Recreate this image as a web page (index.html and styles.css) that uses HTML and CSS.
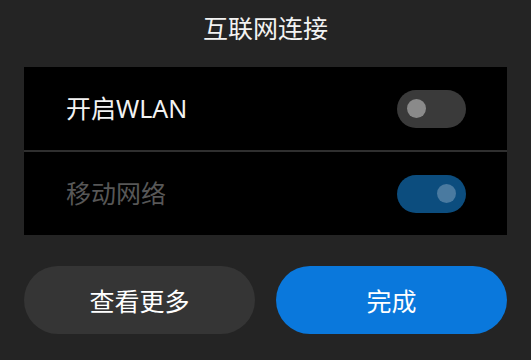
FILE: index.html
```html
<!DOCTYPE html>
<html lang="zh-CN">
<head>
<meta charset="utf-8">
<link rel="stylesheet" href="styles.css">
</head>
<body>
<div class="dialog">
  <h1 class="title">互联网连接</h1>
  <div class="card">
    <div class="row">
      <span class="label">开启WLAN</span>
      <span class="toggle off"><span class="knob"></span></span>
    </div>
    <div class="divider"></div>
    <div class="row">
      <span class="label dim">移动网络</span>
      <span class="toggle on"><span class="knob"></span></span>
    </div>
  </div>
  <div class="actions">
    <button class="btn secondary">查看更多</button>
    <button class="btn primary">完成</button>
  </div>
</div>
</body>
</html>
```
FILE: styles.css
```css
html, body {
  margin: 0;
  padding: 0;
  background: #242424;
}
body {
  width: 531px;
  height: 360px;
  overflow: hidden;
  font-family: "Noto Sans", "Noto Sans CJK SC", sans-serif;
  color: #fff;
}
.dialog {
  display: flex;
  flex-direction: column;
  padding: 0 24px;
}
.title {
  margin: 0;
  height: 67px;
  display: flex;
  align-items: center;
  justify-content: center;
  font-size: 25px;
  font-weight: 400;
  color: #f2f2f2;
  padding-bottom: 13px;
  box-sizing: border-box;
}
.card {
  background: #000;
  display: flex;
  flex-direction: column;
}
.row {
  height: 83px;
  display: flex;
  align-items: center;
  justify-content: space-between;
  padding: 0 41px 0 42px;
}
.divider {
  height: 2px;
  background: #2f2f2f;
}
.label {
  font-size: 25px;
  color: #f2f2f2;
  line-height: 1;
}
.label.dim {
  color: #575757;
}
.toggle {
  width: 69px;
  height: 38px;
  border-radius: 19px;
  display: flex;
  align-items: center;
  padding: 0 10px;
  box-sizing: border-box;
}
.toggle .knob {
  width: 19px;
  height: 19px;
  border-radius: 50%;
}
.toggle.off {
  background: #3a3a3a;
}
.toggle.off .knob {
  background: #8a8a8a;
}
.toggle.on {
  background: #0c4d7e;
  justify-content: flex-end;
}
.toggle.on .knob {
  background: #4a7aa0;
}
.actions {
  display: flex;
  gap: 21px;
  margin-top: 31px;
}
.btn {
  flex: 1;
  height: 68px;
  border: none;
  border-radius: 34px;
  font-family: inherit;
  font-size: 25px;
  color: #fff;
  padding: 0;
}
.btn.secondary {
  background: #353535;
}
.btn.primary {
  background: #0a78dc;
}
```
